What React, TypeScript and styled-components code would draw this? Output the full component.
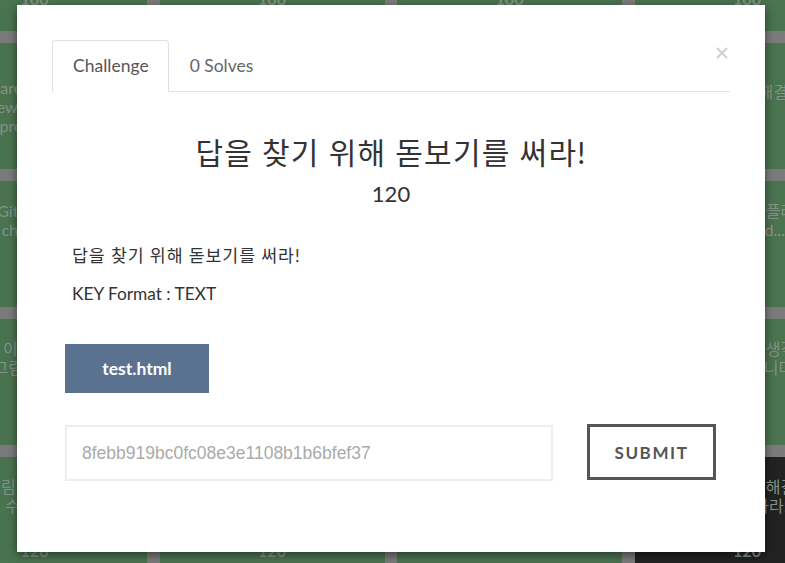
import React from "react";
import styled, { createGlobalStyle } from "styled-components";

const GlobalStyle = createGlobalStyle`
  html, body {
    margin: 0;
    padding: 0;
  }
  body {
    width: 785px;
    height: 563px;
    overflow: hidden;
    background: #7b7b7b;
    font-family: Lato, "Noto Sans CJK KR", sans-serif;
  }
`;

const Page = styled.div`
  position: relative;
  width: 785px;
  height: 563px;
  overflow: hidden;
  background: #7b7b7b;
`;

const Board = styled.div`
  display: grid;
  grid-template-columns: repeat(4, 225px);
  grid-auto-rows: 126px;
  column-gap: 12.5px;
  row-gap: 12px;
  margin: -95px 0 0 -78px;
`;

const Tile = styled.div<{ $dark?: boolean }>`
  background: ${(p) => (p.$dark ? "#222222" : "#4a7350")};
  display: flex;
  flex-direction: column;
  align-items: center;
  justify-content: center;
  color: #849285;
  font-size: 16px;
  line-height: 19px;
  white-space: nowrap;
`;

const TileName = styled.div<{ $tint?: boolean }>`
  color: ${(p) => (p.$tint ? "#9f9868" : "inherit")};
`;

const TileValue = styled.div`
  margin-top: 24px;
  font-size: 16px;
  line-height: 24px;
  font-weight: 700;
`;

const Modal = styled.div`
  position: absolute;
  left: 17px;
  top: 5px;
  width: 748px;
  height: 547px;
  box-sizing: border-box;
  padding: 35px;
  background: #fff;
  box-shadow: 0 3px 9px rgba(0, 0, 0, 0.5);
  color: #333;
`;

const Close = styled.button`
  position: absolute;
  top: 42px;
  right: 37px;
  width: 12px;
  height: 12px;
  padding: 0;
  border: 0;
  background: none;
  display: flex;
`;

const TabBar = styled.div`
  display: flex;
  border-bottom: 1px solid #dee2e6;
`;

const Tab = styled.div<{ $active?: boolean }>`
  margin-bottom: -1px;
  padding: 13px 19px 13px 20px;
  font-size: 17.5px;
  line-height: 24px;
  color: ${(p) => (p.$active ? "#555" : "#666")};
  border: 1px solid ${(p) => (p.$active ? "#dee2e6" : "transparent")};
  border-bottom-color: ${(p) => (p.$active ? "#fff" : "transparent")};
  border-radius: 4px 4px 0 0;
`;

const Pane = styled.div`
  padding: 0 13px;
`;

const Title = styled.h3`
  margin: 42px 0 0;
  text-align: center;
  font-size: 30px;
  line-height: 36px;
  font-weight: 400;
  letter-spacing: 1.25px;
`;

const Points = styled.h4`
  margin: 11px 0 0;
  text-align: center;
  font-size: 22px;
  line-height: 26px;
  font-weight: 400;
`;

const Description = styled.div`
  margin-top: 37px;
  padding-left: 7px;
`;

const Para = styled.p<{ $spaced?: boolean }>`
  margin: 0 0 14px;
  font-size: 17.3px;
  line-height: 24px;
  letter-spacing: ${(p) => (p.$spaced ? "0.9px" : "0")};
`;

const FileButton = styled.a`
  display: flex;
  align-items: center;
  justify-content: center;
  width: 144px;
  height: 49px;
  margin-top: 38px;
  background: #5b7190;
  color: #fff;
  font-size: 17.5px;
  font-weight: 700;
  text-decoration: none;
`;

const SubmitRow = styled.form`
  display: flex;
  align-items: flex-start;
  gap: 34px;
  margin-top: 32px;
`;

const KeyInput = styled.input`
  box-sizing: border-box;
  width: 488px;
  height: 56px;
  padding: 0 15px;
  border: 2px solid #eeeeee;
  outline: none;
  font-family: "Liberation Sans", Arial, sans-serif;
  font-size: 17.5px;
  color: #aaa;
  &::placeholder {
    color: #aaa;
  }
`;

const SubmitButton = styled.button`
  box-sizing: border-box;
  width: 129px;
  height: 56px;
  margin-top: -1px;
  border: 3px solid #555;
  background: #fff;
  color: #555;
  font-family: Lato, sans-serif;
  font-size: 17px;
  font-weight: 700;
  letter-spacing: 1.6px;
`;

type TileData = { lines: string[]; value: string; dark?: boolean; tint?: number };

// challenge board behind the modal, only the edges show
const tiles: TileData[] = [
  { lines: ["Warm up", "Start"], value: "100" },
  { lines: ["Welcome", "Notice"], value: "100" },
  { lines: ["Basic", "Linux"], value: "100" },
  { lines: ["Misc", "Quiz"], value: "100" },
  { lines: ["Hardware review notes", "Review newest tips", "Hello problem solving"], value: "" },
  { lines: ["Web", "Login"], value: "100" },
  { lines: ["Forensic", "Memory"], value: "100" },
  { lines: ["정답", "보안 문제를 해결하라"], value: "100" },
  { lines: ["Git Branch", "challenge"], value: "100" },
  { lines: ["Crypto", "Caesar"], value: "100" },
  { lines: ["Reversing", "Crackme"], value: "100" },
  { lines: ["모든 숨겨진 플래그", "Go world..."], value: "100", tint: 1 },
  { lines: ["이 그림은", "그림 찾기 ㅡ"], value: "110" },
  { lines: ["Pwnable", "Stack"], value: "110" },
  { lines: ["Network", "Packet"], value: "110" },
  { lines: ["오늘 너는 무엇이 생각 나나요", "생각하면 니다"], value: "110" },
  { lines: ["그림 찾기 놀이", "수수께끼"], value: "120" },
  { lines: ["Stego", "Image"], value: "120" },
  { lines: ["Script", "Python"], value: "" },
  { lines: ["이 문제를 해결", "답을 찾아라!"], value: "120", dark: true },
];

const App: React.FC = () => {
  return (
    <Page>
      <GlobalStyle />
      <Board>
        {tiles.map((t, i) => (
          <Tile key={i} $dark={t.dark}>
            {t.lines.map((l, j) => (
              <TileName key={j} $tint={t.tint === j}>
                {l}
              </TileName>
            ))}
            {t.value && <TileValue>{t.value}</TileValue>}
          </Tile>
        ))}
      </Board>

      <Modal>
        <Close aria-label="Close">
          <svg width="12" height="12" viewBox="0 0 12 12">
            <path d="M1 1L11 11M11 1L1 11" stroke="#cfcfcf" strokeWidth="2" />
          </svg>
        </Close>
        <TabBar>
          <Tab $active>Challenge</Tab>
          <Tab>0 Solves</Tab>
        </TabBar>
        <Pane>
          <Title>답을 찾기 위해 돋보기를 써라!</Title>
          <Points>120</Points>
          <Description>
            <Para $spaced>답을 찾기 위해 돋보기를 써라!</Para>
            <Para>KEY Format : TEXT</Para>
          </Description>
          <FileButton href="#">test.html</FileButton>
          <SubmitRow onSubmit={(e) => e.preventDefault()}>
            <KeyInput placeholder="8febb919bc0fc08e3e1108b1b6bfef37" />
            <SubmitButton type="submit">SUBMIT</SubmitButton>
          </SubmitRow>
        </Pane>
      </Modal>
    </Page>
  );
};

export default App;
